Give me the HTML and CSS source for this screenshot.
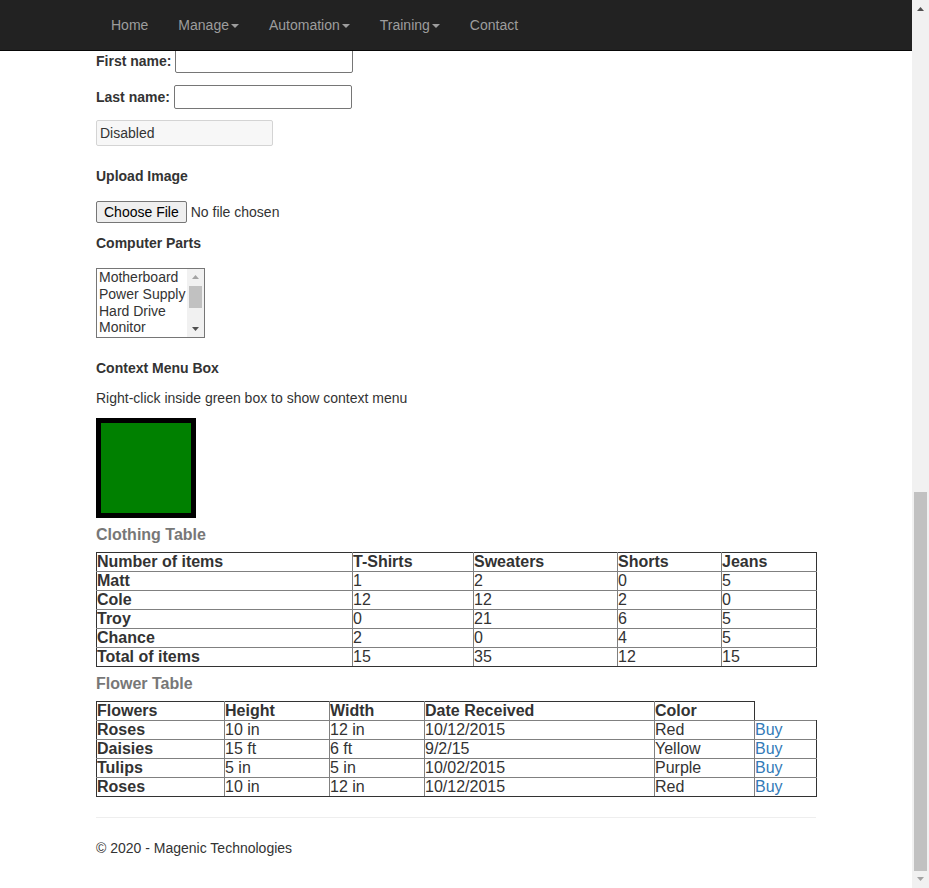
FILE: index.html
```html
<!DOCTYPE html>
<html lang="en">
<head>
<meta charset="utf-8">
<title>Automation Test Site</title>
<link rel="stylesheet" href="styles.css">
</head>
<body>
<nav class="navbar">
  <div class="nav-container">
    <ul class="nav">
      <li><a href="#">Home</a></li>
      <li><a href="#">Manage<span class="caret"></span></a></li>
      <li><a href="#">Automation<span class="caret"></span></a></li>
      <li><a href="#">Training<span class="caret"></span></a></li>
      <li><a href="#">Contact</a></li>
    </ul>
  </div>
</nav>

<main class="container">
  <div class="field-row first-row">
    <label for="firstName" class="field-label">First name:</label>
    <input id="firstName" class="text-input" type="text">
  </div>
  <div class="field-row second-row">
    <label for="lastName" class="field-label">Last name:</label>
    <input id="lastName" class="text-input" type="text">
  </div>
  <div class="field-row">
    <input class="disabled-input" type="text" value="Disabled" disabled>
  </div>

  <label class="section-label upload-label" for="photo">Upload Image</label>
  <input id="photo" class="file-input" type="file">

  <label class="section-label parts-label" for="parts">Computer Parts</label>
  <div class="listbox-frame">
    <select id="parts" class="listbox" multiple size="4">
      <option>Motherboard</option>
      <option>Power Supply</option>
      <option>Hard Drive</option>
      <option>Monitor</option>
      <option>Keyboard</option>
      <option>Mouse</option>
    </select>
    <div class="lb-scrollbar" aria-hidden="true">
      <div class="sb-arrow"><svg width="17" height="17" viewBox="0 0 17 17"><path d="M5 10 L12 10 L8.5 6 Z" fill="#a3a3a3"/></svg></div>
      <div class="lb-track"><div class="lb-thumb"></div></div>
      <div class="sb-arrow"><svg width="17" height="17" viewBox="0 0 17 17"><path d="M5 7 L12 7 L8.5 11 Z" fill="#505050"/></svg></div>
    </div>
  </div>

  <label class="section-label context-label">Context Menu Box</label>
  <p class="hint">Right-click inside green box to show context menu</p>
  <div class="green-box"></div>

  <h4 class="table-title clothing-title">Clothing Table</h4>
  <table class="grid clothing">
    <colgroup>
      <col class="c-name"><col class="c-tshirt"><col class="c-sweater"><col class="c-shorts"><col class="c-jeans">
    </colgroup>
    <tr><th>Number of items</th><th>T-Shirts</th><th>Sweaters</th><th>Shorts</th><th>Jeans</th></tr>
    <tr><th>Matt</th><td>1</td><td>2</td><td>0</td><td>5</td></tr>
    <tr><th>Cole</th><td>12</td><td>12</td><td>2</td><td>0</td></tr>
    <tr><th>Troy</th><td>0</td><td>21</td><td>6</td><td>5</td></tr>
    <tr><th>Chance</th><td>2</td><td>0</td><td>4</td><td>5</td></tr>
    <tr><th>Total of items</th><td>15</td><td>35</td><td>12</td><td>15</td></tr>
  </table>

  <h4 class="table-title flower-title">Flower Table</h4>
  <table class="grid flowers">
    <colgroup>
      <col class="f-name"><col class="f-height"><col class="f-width"><col class="f-date"><col class="f-color"><col class="f-buy">
    </colgroup>
    <tr><th>Flowers</th><th>Height</th><th>Width</th><th>Date Received</th><th>Color</th></tr>
    <tr><th>Roses</th><td>10 in</td><td>12 in</td><td>10/12/2015</td><td>Red</td><td><a href="#">Buy</a></td></tr>
    <tr><th>Daisies</th><td>15 ft</td><td>6 ft</td><td>9/2/15</td><td>Yellow</td><td><a href="#">Buy</a></td></tr>
    <tr><th>Tulips</th><td>5 in</td><td>5 in</td><td>10/02/2015</td><td>Purple</td><td><a href="#">Buy</a></td></tr>
    <tr><th>Roses</th><td>10 in</td><td>12 in</td><td>10/12/2015</td><td>Red</td><td><a href="#">Buy</a></td></tr>
  </table>

  <hr class="divider">
  <footer class="footer">
    <p>&copy; 2020 - Magenic Technologies</p>
  </footer>
</main>

<div class="page-scrollbar" aria-hidden="true">
  <div class="sb-arrow"><svg width="17" height="17" viewBox="0 0 17 17"><path d="M5 11 L12 11 L8.5 7 Z" fill="#505050"/></svg></div>
  <div class="sb-track"><div class="sb-thumb"></div></div>
  <div class="sb-arrow"><svg width="17" height="17" viewBox="0 0 17 17"><path d="M5 6 L12 6 L8.5 10 Z" fill="#a3a3a3"/></svg></div>
</div>
</body>
</html>
```

FILE: styles.css
```css
html, body {
  overflow: hidden;
  height: 100%;
}

body {
  margin: 0 17px 0 0;
  font-family: "Liberation Sans", Arial, Helvetica, sans-serif;
  font-size: 14px;
  line-height: 20px;
  color: #333;
  background: #fff;
}

/* Navbar */
.navbar {
  position: fixed;
  top: 0;
  left: 0;
  right: 17px;
  height: 50px;
  background: #222;
  border-bottom: 1px solid #080808;
  z-index: 10;
}

.nav-container {
  width: 720px;
  margin: 0 auto;
  padding: 0 15px;
}

.nav {
  list-style: none;
  margin: 0;
  padding: 0;
  display: flex;
}

.nav a {
  display: block;
  padding: 15px 15px;
  line-height: 20px;
  color: #9d9d9d;
  text-decoration: none;
}

.caret {
  display: inline-block;
  width: 0;
  height: 0;
  margin-left: 2px;
  vertical-align: middle;
  border-top: 4px solid #9d9d9d;
  border-right: 4px solid transparent;
  border-left: 4px solid transparent;
}

/* Main content */
.container {
  width: 720px;
  margin: 0 auto;
  padding: 49px 15px 0;
  display: flex;
  flex-direction: column;
  align-items: flex-start;
}

.field-row {
  display: flex;
  align-items: center;
  gap: 4px;
}

.first-row {
  margin-bottom: 12px;
}

.second-row {
  margin-bottom: 11px;
}

.field-label {
  font-weight: bold;
}

.text-input {
  box-sizing: border-box;
  width: 178px;
  height: 24px;
  margin: 0;
  padding: 1px 2px;
  border: 1px solid #767676;
  border-radius: 2px;
  font: inherit;
  color: #333;
  background: #fff;
}

.disabled-input {
  box-sizing: border-box;
  width: 177px;
  height: 26px;
  margin: 0;
  padding: 1px 3px;
  border: 1px solid #d4d4d4;
  border-radius: 2px;
  font: inherit;
  color: #333;
  background: #f7f7f7;
}

.section-label {
  font-weight: bold;
  display: block;
}

.upload-label {
  margin-top: 20px;
}

.file-input {
  margin-top: 15px;
  font: inherit;
  color: #333;
  height: 22px;
  line-height: 22px;
}

.file-input::file-selector-button {
  box-sizing: border-box;
  height: 22px;
  margin: 0 4px 0 0;
  padding: 0 7px;
  border: 1px solid #767676;
  border-radius: 2px;
  background: #efefef;
  color: #000;
  font: inherit;
  line-height: 20px;
}

.parts-label {
  margin-top: 10px;
}

/* Listbox with its scrollbar */
.listbox-frame {
  margin-top: 15px;
  box-sizing: border-box;
  width: 109px;
  height: 70px;
  border: 1px solid #767676;
  display: flex;
  background: #fff;
}

.listbox {
  flex: 1;
  min-width: 0;
  height: 68px;
  margin: 0;
  padding: 0;
  border: 0;
  outline: none;
  overflow: hidden;
  font: inherit;
  font-size: 14px;
  color: #333;
  background: #fff;
}

.listbox option {
  padding: 0 2px;
  line-height: 17px;
}

.lb-scrollbar {
  width: 17px;
  flex: none;
  background: #f1f1f1;
  display: flex;
  flex-direction: column;
}

.lb-track {
  flex: 1;
}

.lb-thumb {
  margin: 0 2px;
  height: 22px;
  background: #c1c1c1;
}

.context-label {
  margin-top: 20px;
}

.hint {
  margin: 10px 0 0;
}

.green-box {
  margin-top: 10px;
  box-sizing: border-box;
  width: 100px;
  height: 100px;
  background: #008000;
  border: 5px solid #000;
}

.table-title {
  margin: 8px 0 0;
  font-size: 16px;
  line-height: 18px;
  font-weight: bold;
  color: #777;
}

/* Tables */
.grid {
  margin-top: 8px;
  width: 720px;
  table-layout: fixed;
  border-collapse: collapse;
  border-spacing: 0;
  font-size: 16px;
  line-height: 18px;
  color: #333;
}

.grid th,
.grid td {
  padding: 0;
  border: 1px solid #808080;
  text-align: left;
  vertical-align: top;
  white-space: nowrap;
}

.grid th {
  font-weight: bold;
}

.grid td {
  font-weight: normal;
}

.grid tr:first-child > * {
  border-top-color: #333;
}

.grid tr:last-child > * {
  border-bottom-color: #333;
}

.grid tr > :first-child {
  border-left-color: #333;
}

.grid tr > :last-child {
  border-right-color: #333;
}

.grid a {
  color: #337ab7;
  text-decoration: none;
}

.c-name { width: 256px; }
.c-tshirt { width: 121px; }
.c-sweater { width: 144px; }
.c-shorts { width: 104px; }
.c-jeans { width: 95px; }

.f-name { width: 128px; }
.f-height { width: 105px; }
.f-width { width: 95px; }
.f-date { width: 230px; }
.f-color { width: 100px; }
.f-buy { width: 62px; }

.divider {
  align-self: stretch;
  margin: 20px 0 0;
  border: 0;
  border-top: 1px solid #eee;
  height: 0;
}

.footer p {
  margin: 20px 0 0;
}

/* Fake page scrollbar (window chrome) */
.page-scrollbar {
  position: fixed;
  top: 0;
  right: 0;
  width: 17px;
  height: 100%;
  background: #f1f1f1;
  display: flex;
  flex-direction: column;
  z-index: 20;
}

.sb-arrow {
  height: 17px;
  flex: none;
}

.sb-arrow svg {
  display: block;
}

.sb-track {
  flex: 1;
  display: flex;
  flex-direction: column;
  justify-content: flex-end;
}

.sb-thumb {
  margin: 0 2px;
  height: 379px;
  background: #c1c1c1;
}
```
